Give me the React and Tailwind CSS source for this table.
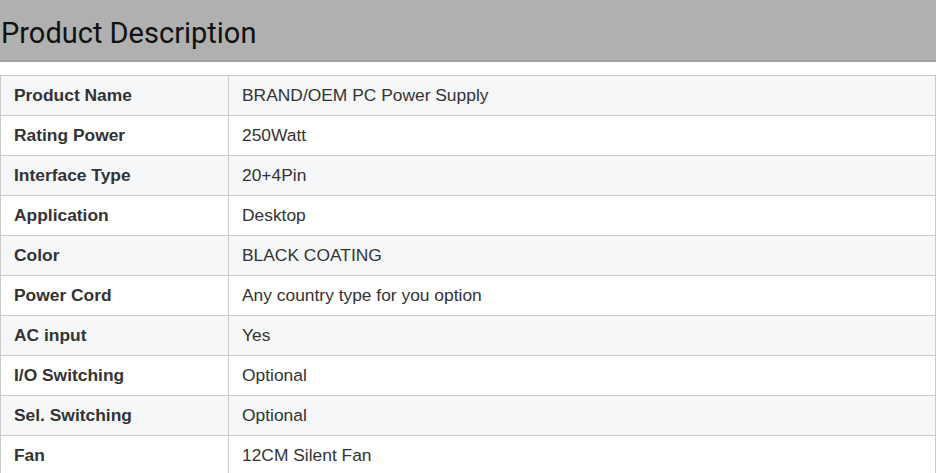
import React from 'react';

const rows = [
  ['Product Name', 'BRAND/OEM PC Power Supply'],
  ['Rating Power', '250Watt'],
  ['Interface Type', '20+4Pin'],
  ['Application', 'Desktop'],
  ['Color', 'BLACK COATING'],
  ['Power Cord', 'Any country type for you option'],
  ['AC input', 'Yes'],
  ['I/O Switching', 'Optional'],
  ['Sel. Switching', 'Optional'],
  ['Fan', '12CM Silent Fan'],
];

const App = () => {
  return (
    <div className="w-[936px] h-[473px] overflow-hidden bg-white">
      <div className="h-[62px] bg-[#b0b0b0] border-b-2 border-[#a2a2a2] flex items-center">
        <h2 className="pl-[1px] pt-[6px] text-[29px] text-[#111] font-['Roboto',sans-serif] leading-none">
          Product Description
        </h2>
      </div>
      <table className="mt-[13px] w-[936px] border-collapse font-['Liberation_Sans',Arial,sans-serif] text-[17.4px] text-[#333]">
        <tbody>
          {rows.map(([label, value], i) => (
            <tr key={label} className={i % 2 === 0 ? 'bg-[#f6f7f9]' : 'bg-white'}>
              <td className="w-[228px] h-[40px] border border-[#cbcbcb] pl-[13px] font-bold">{label}</td>
              <td className="h-[40px] border border-[#cbcbcb] pl-[13px]">{value}</td>
            </tr>
          ))}
        </tbody>
      </table>
    </div>
  );
};

export default App;
